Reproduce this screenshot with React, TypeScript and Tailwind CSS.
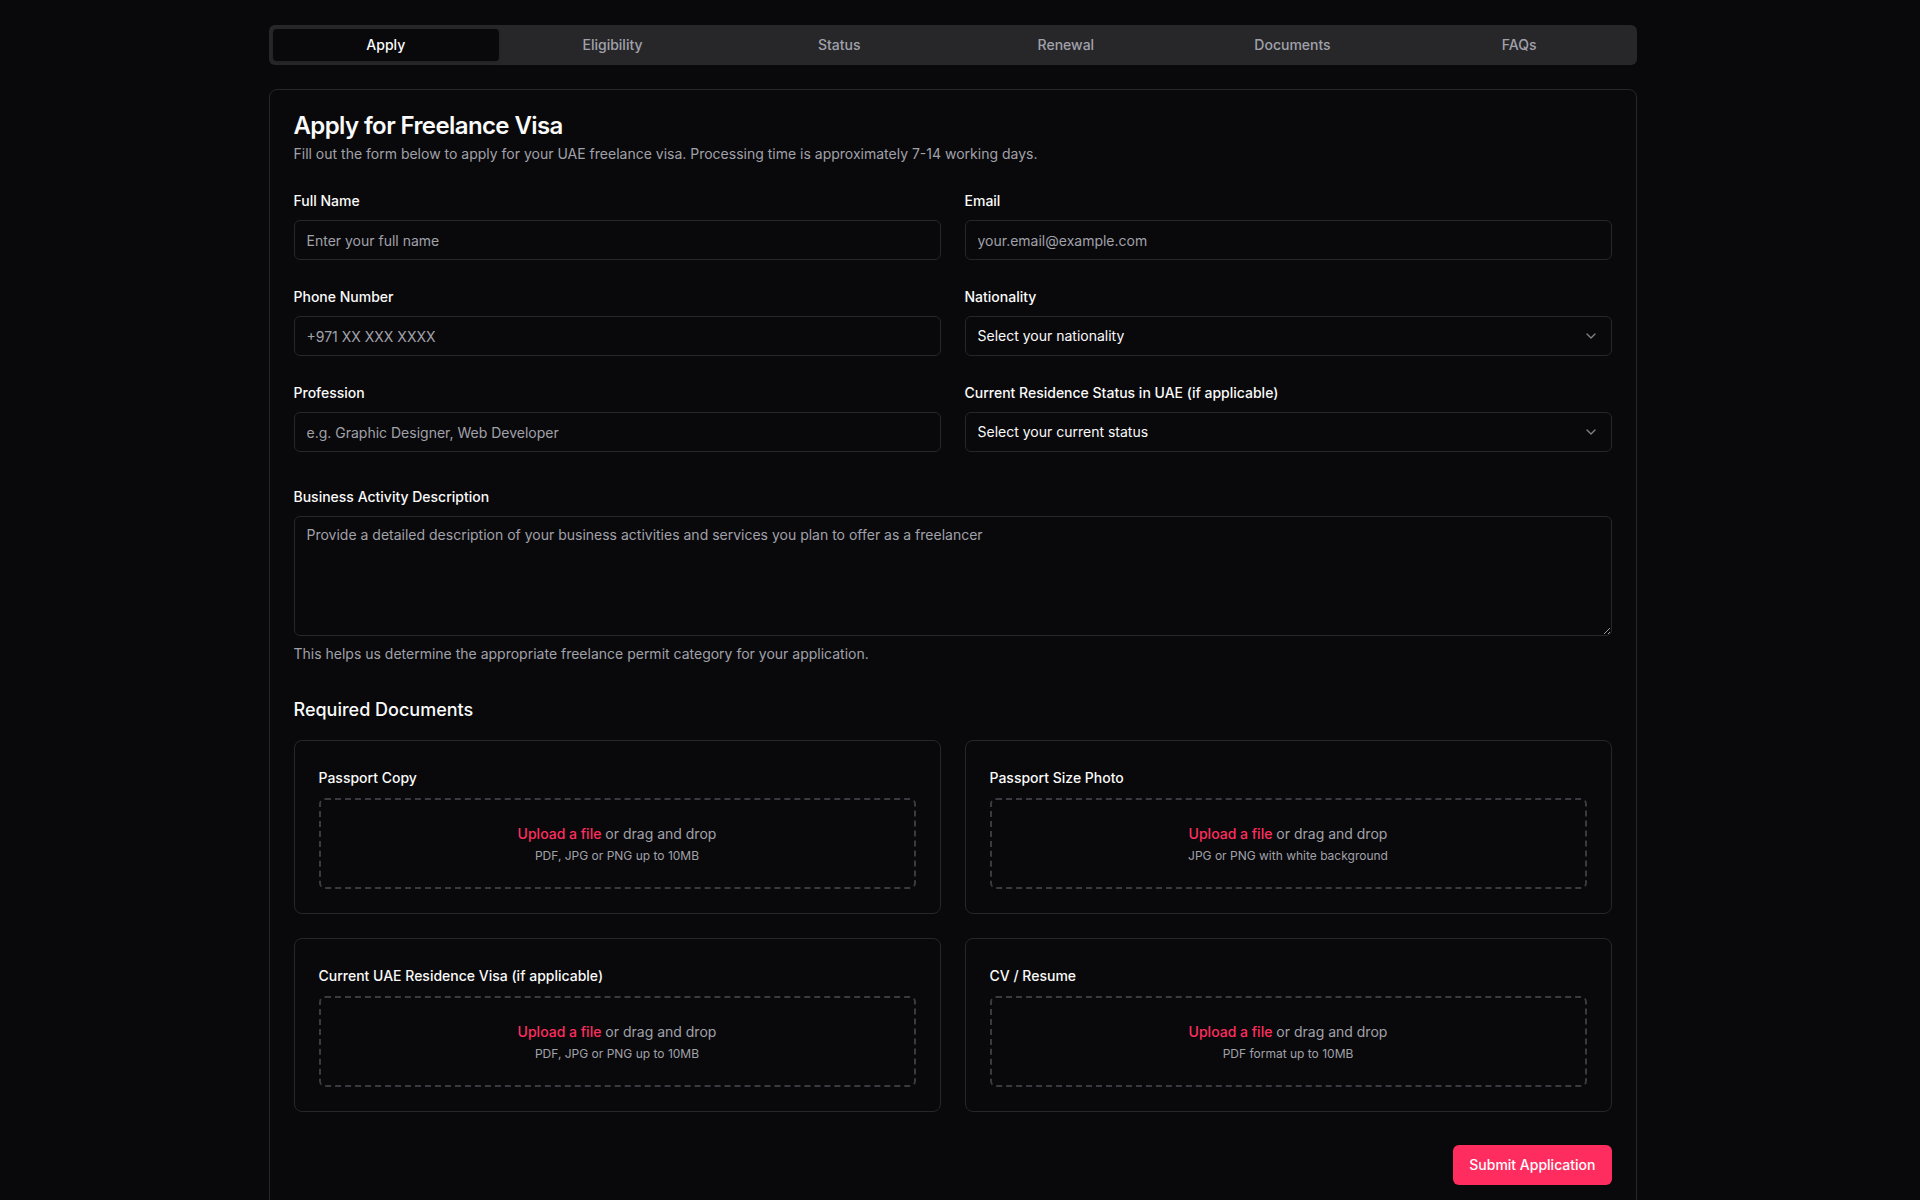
import React from "react";
import { ChevronDown } from "lucide-react";

const tabs = ["Apply", "Eligibility", "Status", "Renewal", "Documents", "FAQs"];

function Field({ label, placeholder }: { label: string; placeholder: string }) {
  return (
    <div className="flex flex-col">
      <label className="mt-[6px] mb-3 block text-sm font-medium leading-none text-[#fafafa]">{label}</label>
      <input
        className="h-10 w-full rounded-md border border-[#27272a] bg-transparent px-3 py-2 text-sm text-[#fafafa] outline-none placeholder:text-[#a1a1aa]"
        placeholder={placeholder}
      />
    </div>
  );
}

function SelectField({ label, value }: { label: string; value: string }) {
  return (
    <div className="flex flex-col">
      <label className="mt-[6px] mb-3 block text-sm font-medium leading-none text-[#fafafa]">{label}</label>
      <button
        type="button"
        className="flex h-10 w-full items-center justify-between rounded-md border border-[#27272a] bg-transparent px-3 py-2 text-left text-sm text-[#fafafa]"
      >
        <span>{value}</span>
        <ChevronDown className="h-4 w-4 opacity-50" />
      </button>
    </div>
  );
}

function Upload({ label, hint }: { label: string; hint: string }) {
  return (
    <div className="rounded-lg border border-[#27272a] p-6">
      <div className="mt-[6px] mb-[13px] text-sm font-medium leading-none text-[#fafafa]">{label}</div>
      <div className="flex h-[91px] flex-col items-center justify-center rounded-md border-2 border-dashed border-[#3a3a40]">
        <div className="text-sm leading-5 text-[#a1a1aa]">
          <span className="font-medium text-[#ff2d5f]">Upload a file</span> or drag and drop
        </div>
        <div className="mt-1 text-xs leading-4 text-[#a1a1aa]">{hint}</div>
      </div>
    </div>
  );
}

export default function App() {
  return (
    <div className="min-h-screen bg-[#09090b] pr-[15px] font-['Inter','Noto_Sans',sans-serif] text-[#fafafa] [color-scheme:dark]">
      <div className="mx-auto max-w-[1400px] px-4 pt-[25px] pb-24">
        <div className="grid h-10 grid-cols-6 rounded-md bg-[#27272a] p-1">
          {tabs.map((t, i) => (
            <div
              key={t}
              className={
                i === 0
                  ? "flex items-center justify-center rounded-sm bg-[#09090b] text-sm font-medium text-[#fafafa] shadow-sm"
                  : "flex items-center justify-center rounded-sm text-sm font-medium text-[#a1a1aa]"
              }
            >
              {t}
            </div>
          ))}
        </div>

        <div className="mt-6 rounded-lg border border-[#27272a] bg-[#09090b]">
          <div className="p-6">
            <h2 className="text-2xl font-semibold leading-none tracking-tight text-[#fafafa]">Apply for Freelance Visa</h2>
            <p className="mt-1.5 text-sm leading-5 text-[#a1a1aa]">
              Fill out the form below to apply for your UAE freelance visa. Processing time is approximately 7-14 working days.
            </p>
          </div>
          <div className="px-6 pb-6">
            <div className="grid grid-cols-2 gap-x-6 gap-y-6">
              <Field label="Full Name" placeholder="Enter your full name" />
              <Field label="Email" placeholder="your.email@example.com" />
              <Field label="Phone Number" placeholder="+971 XX XXX XXXX" />
              <SelectField label="Nationality" value="Select your nationality" />
              <Field label="Profession" placeholder="e.g. Graphic Designer, Web Developer" />
              <SelectField label="Current Residence Status in UAE (if applicable)" value="Select your current status" />
            </div>

            <div className="mt-[38px] flex flex-col">
              <label className="mb-3 block text-sm font-medium leading-none text-[#fafafa]">Business Activity Description</label>
              <textarea
                className="h-[120px] w-full rounded-md border border-[#27272a] bg-transparent px-3 py-2 text-sm leading-5 text-[#fafafa] outline-none placeholder:text-[#a1a1aa]"
                placeholder="Provide a detailed description of your business activities and services you plan to offer as a freelancer"
              />
              <p className="mt-2 text-sm leading-5 text-[#a1a1aa]">
                This helps us determine the appropriate freelance permit category for your application.
              </p>
            </div>

            <h3 className="mt-[32px] text-lg font-medium leading-7 text-[#fafafa]">Required Documents</h3>
            <div className="mt-[16px] grid grid-cols-2 gap-6">
              <Upload label="Passport Copy" hint="PDF, JPG or PNG up to 10MB" />
              <Upload label="Passport Size Photo" hint="JPG or PNG with white background" />
              <Upload label="Current UAE Residence Visa (if applicable)" hint="PDF, JPG or PNG up to 10MB" />
              <Upload label="CV / Resume" hint="PDF format up to 10MB" />
            </div>

            <div className="mt-[33px] flex justify-end">
              <button
                type="button"
                className="h-10 rounded-md bg-[#ff2d5f] px-4 text-sm font-medium text-white"
              >
                Submit Application
              </button>
            </div>
          </div>
        </div>
      </div>
    </div>
  );
}
